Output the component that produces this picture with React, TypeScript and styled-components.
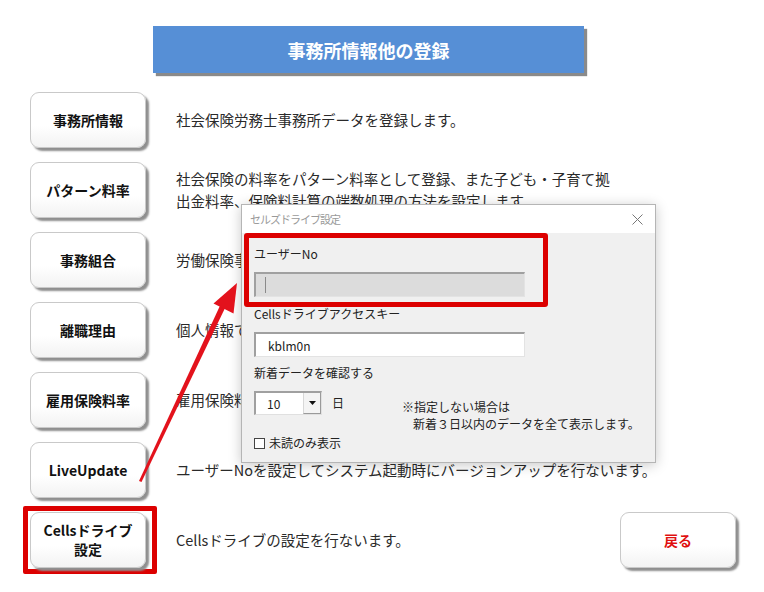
import styled, { createGlobalStyle } from "styled-components";

const MENU = [
  { label: "事務所情報", desc: ["社会保険労務士事務所データを登録します。"] },
  {
    label: "パターン料率",
    desc: [
      "社会保険の料率をパターン料率として登録、また子ども・子育て拠",
      "出金料率、保険料計算の端数処理の方法を設定します。",
    ],
  },
  { label: "事務組合", desc: ["労働保険事務組合の情報を登録します。"] },
  { label: "離職理由", desc: ["個人情報で使用する離職理由を登録します。"] },
  { label: "雇用保険料率", desc: ["雇用保険料率を年度ごとに登録します。"] },
  {
    label: "LiveUpdate",
    desc: ["ユーザーNoを設定してシステム起動時にバージョンアップを行ないます。"],
  },
];

const GlobalStyle = createGlobalStyle`
  body {
    margin: 0;
    background: #ffffff;
    font-family: "Noto Sans CJK JP", "Noto Sans", sans-serif;
    color: #222;
  }
`;

export default function App() {
  return (
    <>
      <GlobalStyle />
      <Page>
        <TitleBar>事務所情報他の登録</TitleBar>
        <MenuList>
          {MENU.map((item) => (
            <Row key={item.label}>
              <MenuButton>{item.label}</MenuButton>
              <Desc>
                {item.desc.map((line) => (
                  <div key={line}>{line}</div>
                ))}
              </Desc>
            </Row>
          ))}
          <Row>
            <Marker>
              <MenuButton>
                Cellsドライブ
                <br />
                設定
              </MenuButton>
            </Marker>
            <Desc>Cellsドライブの設定を行ないます。</Desc>
            <MenuButton $danger>戻る</MenuButton>
          </Row>
        </MenuList>

        <SettingsDialog />
        <Pointer />
      </Page>
    </>
  );
}

function SettingsDialog() {
  return (
    <Dialog>
      <DialogHeader>
        <DialogTitle>セルズドライブ設定</DialogTitle>
        <svg width="11" height="11" viewBox="0 0 11 11">
          <path d="M0.5 0.5 L10.5 10.5 M10.5 0.5 L0.5 10.5" stroke="#777" strokeWidth="1" />
        </svg>
      </DialogHeader>
      <DialogBody>
        <MarkedGroup>
          <FieldLabel>ユーザーNo</FieldLabel>
          <TextField $disabled>
            <Caret />
          </TextField>
        </MarkedGroup>
        <FieldLabel $gap={-1}>Cellsドライブアクセスキー</FieldLabel>
        <TextField $gap={10}>kblm0n</TextField>
        <FieldLabel $gap={8}>新着データを確認する</FieldLabel>
        <ComboRow>
          <Combo>
            <ComboValue>10</ComboValue>
            <ComboDrop>
              <svg width="7" height="4" viewBox="0 0 7 4">
                <path d="M0 0 L7 0 L3.5 4 Z" fill="#111" />
              </svg>
            </ComboDrop>
          </Combo>
          <Unit>日</Unit>
          <Note>
            <div>※指定しない場合は</div>
            <NoteIndent>新着３日以内のデータを全て表示します。</NoteIndent>
          </Note>
        </ComboRow>
        <CheckRow>
          <CheckBox />
          未読のみ表示
        </CheckRow>
      </DialogBody>
    </Dialog>
  );
}

function Pointer() {
  return (
    <PointerSvg width="764" height="592" viewBox="0 0 764 592">
      <polygon points="139,481 141.5,482 226,306 221,303.5" fill="#e3121c" />
      <polygon points="237,283 213.5,303.5 233.5,313.5" fill="#e3121c" />
    </PointerSvg>
  );
}

const Page = styled.div`
  position: relative;
  width: 764px;
  height: 592px;
  box-sizing: border-box;
  padding: 26px 28px 0 30px;
  overflow: hidden;
`;

const TitleBar = styled.div`
  margin-left: 123px;
  width: 431px;
  height: 47px;
  background: #568fd6;
  box-shadow: 3px 3px 1px #8a8a8a;
  color: #fff;
  font-size: 18px;
  font-weight: 700;
  display: flex;
  align-items: center;
  justify-content: center;
`;

const MenuList = styled.div`
  margin-top: 19px;
  display: flex;
  flex-direction: column;
  gap: 14px;
`;

const Row = styled.div`
  display: grid;
  grid-template-columns: 116px 1fr 116px;
  column-gap: 30px;
  align-items: center;
  height: 56px;
`;

const MenuButton = styled.div<{ $danger?: boolean }>`
  box-sizing: border-box;
  width: 116px;
  height: 56px;
  border: 1px solid #c9c9c9;
  border-radius: 9px;
  background: linear-gradient(#ffffff, #ffffff 60%, #f3f3f3);
  box-shadow: 3px 3px 2px #8f8f8f;
  display: flex;
  align-items: center;
  justify-content: center;
  text-align: center;
  font-size: 14px;
  font-weight: 700;
  line-height: 19px;
  color: ${({ $danger }) => ($danger ? "#e01010" : "#111")};
`;

const Marker = styled.div`
  margin: -6px -11px -6px -7px;
  padding: 1px 6px 1px 2px;
  border: 5px solid #dc0000;
  border-radius: 2px;
`;

const Desc = styled.div`
  font-size: 14.5px;
  line-height: 22px;
  color: #2a2a2a;
  white-space: nowrap;
`;

const Dialog = styled.div`
  position: absolute;
  left: 241px;
  top: 204px;
  width: 415px;
  box-sizing: border-box;
  border: 1px solid #b5b5b5;
  background: #f0f0f0;
  box-shadow: 0 2px 12px rgba(0, 0, 0, 0.22);
  z-index: 2;
`;

const DialogHeader = styled.div`
  height: 28px;
  background: #ffffff;
  display: flex;
  align-items: center;
  justify-content: space-between;
  padding: 0 12px 0 8px;
`;

const DialogTitle = styled.span`
  font-size: 11px;
  letter-spacing: -1px;
  color: #9a9a9a;
`;

const DialogBody = styled.div`
  padding: 0 0 11px 12px;
  display: flex;
  flex-direction: column;
  align-items: flex-start;
  font-size: 12px;
  color: #222;
`;

const MarkedGroup = styled.div`
  margin-left: -10px;
  width: 304px;
  box-sizing: border-box;
  border: 5px solid #dc0000;
  border-radius: 3px;
  padding: 8px 0 5px 5px;
`;

const FieldLabel = styled.div<{ $gap?: number }>`
  margin-top: ${({ $gap }) => $gap ?? 0}px;
  line-height: 16px;
  font-size: 12px;
`;

const TextField = styled.div<{ $disabled?: boolean; $gap?: number }>`
  margin-top: ${({ $gap }) => $gap ?? 10}px;
  box-sizing: border-box;
  width: 271px;
  height: 25px;
  padding-left: 12px;
  display: flex;
  align-items: center;
  font-size: 12px;
  background: ${({ $disabled }) => ($disabled ? "#dcdcdc" : "#ffffff")};
  border-top: 2px solid #a0a0a0;
  border-left: 2px solid #a0a0a0;
  border-right: 1px solid #e3e3e3;
  border-bottom: 1px solid #e3e3e3;
`;

const Caret = styled.span`
  display: block;
  width: 1px;
  height: 16px;
  margin-left: -3px;
  background: #8a8a8a;
`;

const ComboRow = styled.div`
  margin-top: 10px;
  display: flex;
  align-items: flex-start;
`;

const Combo = styled.div`
  box-sizing: border-box;
  width: 68px;
  height: 24px;
  display: flex;
  background: #fff;
  border-top: 2px solid #a0a0a0;
  border-left: 2px solid #a0a0a0;
  border-right: 1px solid #e0e0e0;
  border-bottom: 1px solid #e0e0e0;
`;

const ComboValue = styled.span`
  flex: 1;
  padding-left: 11px;
  line-height: 21px;
`;

const ComboDrop = styled.span`
  width: 16px;
  display: flex;
  align-items: center;
  justify-content: center;
  background: #f4f4f4;
  border-left: 1px solid #d8d8d8;
  border-right: 1px solid #9a9a9a;
  border-bottom: 1px solid #9a9a9a;
`;

const Unit = styled.span`
  margin-left: 10px;
  line-height: 24px;
`;

const Note = styled.div`
  margin: 7px 0 0 58px;
  line-height: 17px;
`;

const NoteIndent = styled.div`
  padding-left: 11px;
`;

const CheckRow = styled.label`
  margin-top: 3px;
  display: flex;
  align-items: center;
  gap: 4px;
  line-height: 16px;
`;

const CheckBox = styled.span`
  box-sizing: border-box;
  width: 11px;
  height: 11px;
  background: #fff;
  border: 1px solid #444;
`;

const PointerSvg = styled.svg`
  position: absolute;
  left: 0;
  top: 0;
  pointer-events: none;
  z-index: 3;
`;
